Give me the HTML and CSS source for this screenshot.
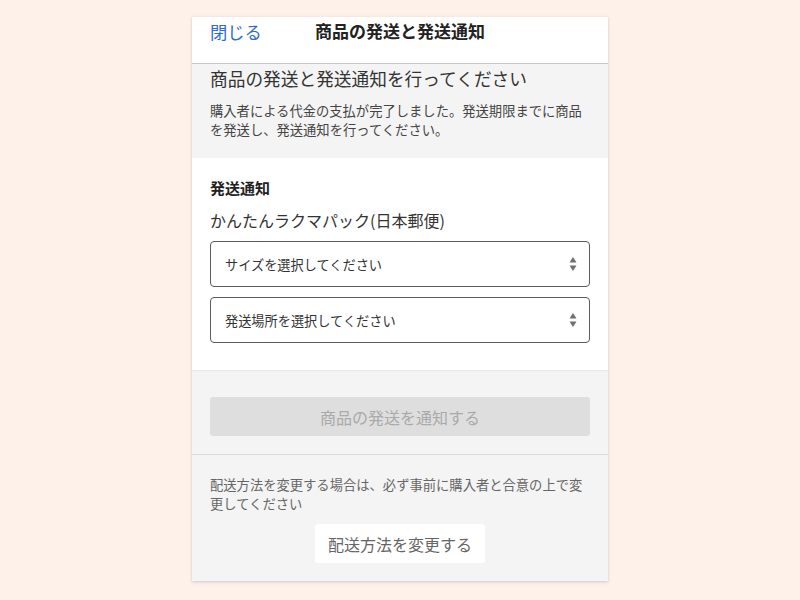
FILE: index.html
```html
<!DOCTYPE html>
<html lang="ja">
<head>
<meta charset="utf-8">
<link rel="stylesheet" href="styles.css">
</head>
<body>
<div class="card">
  <header class="topbar">
    <span class="close">閉じる</span>
    <span class="title">商品の発送と発送通知</span>
  </header>
  <section class="intro">
    <h1 class="intro-title">商品の発送と発送通知を行ってください</h1>
    <p class="intro-text">購入者による代金の支払が完了しました。発送期限までに商品を発送し、発送通知を行ってください。</p>
  </section>
  <section class="form">
    <h2 class="form-title">発送通知</h2>
    <div class="method">かんたんラクマパック(日本郵便)</div>
    <div class="select">
      <span>サイズを選択してください</span>
      <svg class="arrows" width="8" height="16" viewBox="0 0 8 16"><path d="M4 1 L7.5 6.5 L0.5 6.5 Z M0.5 9.5 L7.5 9.5 L4 15 Z" fill="#707070"/></svg>
    </div>
    <div class="select">
      <span>発送場所を選択してください</span>
      <svg class="arrows" width="8" height="16" viewBox="0 0 8 16"><path d="M4 1 L7.5 6.5 L0.5 6.5 Z M0.5 9.5 L7.5 9.5 L4 15 Z" fill="#707070"/></svg>
    </div>
  </section>
  <section class="submit">
    <div class="btn-disabled">商品の発送を通知する</div>
  </section>
  <section class="change">
    <p class="change-text">配送方法を変更する場合は、必ず事前に購入者と合意の上で変更してください</p>
    <div class="btn-change">配送方法を変更する</div>
  </section>
</div>
</body>
</html>
```
FILE: styles.css
```css
* { box-sizing: border-box; }
html, body { margin: 0; padding: 0; }
body {
  background: #fdf1ea;
  font-family: "Noto Sans CJK JP", "Noto Sans", sans-serif;
  color: #333;
  height: 600px;
  overflow: hidden;
}
.card {
  width: 416px;
  margin: 17px auto 0;
  background: #f4f4f4;
  box-shadow: 0 1px 3px rgba(0,0,0,0.18);
}
.topbar {
  height: 47px;
  background: #fff;
  border-bottom: 1px solid #c9c9c9;
  display: flex;
  align-items: flex-start;
  padding: 2px 18px 0;
  position: relative;
}
.close {
  color: #2f6bd6;
  font-size: 17.3px;
  line-height: 26px;
}
.title {
  position: absolute;
  left: 0; right: 0;
  top: 1px;
  text-align: center;
  font-weight: bold;
  font-size: 17px;
  line-height: 26px;
  color: #222;
  pointer-events: none;
}
.intro {
  padding: 2px 18px 0;
  height: 94px;
  background: #f4f4f4;
}
.intro-title {
  margin: 0;
  font-weight: normal;
  font-size: 17.7px;
  line-height: 24px;
  color: #333;
}
.intro-text {
  margin: 11px 0 0;
  font-size: 13.3px;
  line-height: 19px;
  color: #444;
}
.form {
  background: #fff;
  padding: 19px 18px 27px;
}
.form-title {
  margin: 0;
  font-size: 15px;
  font-weight: bold;
  line-height: 22px;
  color: #222;
}
.method {
  margin-top: 10px;
  font-size: 16px;
  line-height: 22px;
  color: #333;
}
.select {
  margin-top: 10px;
  height: 46px;
  border: 1px solid #5a5a5a;
  border-radius: 4px;
  display: flex;
  align-items: center;
  justify-content: space-between;
  padding: 0 12px 0 14px;
  font-size: 13.2px;
  color: #333;
}
.select + .select { margin-top: 10px; }
.arrows { display: block; }
.submit {
  background: #f4f4f4;
  padding: 27px 18px 18px;
  border-bottom: 1px solid #dcdcdc;
  box-shadow: inset 0 2px 2px -1px rgba(0,0,0,0.06);
}
.btn-disabled {
  height: 39px;
  background: #dedede;
  border-radius: 3px;
  display: flex;
  align-items: center;
  justify-content: center;
  font-size: 16px;
  color: #aaa;
}
.change {
  padding: 20px 18px 18px;
  display: flex;
  flex-direction: column;
  align-items: center;
}
.change-text {
  align-self: stretch;
  margin: 0;
  font-size: 13.3px;
  line-height: 19px;
  color: #666;
}
.btn-change {
  margin-top: 11px;
  width: 170px;
  height: 39px;
  background: #fff;
  border-radius: 3px;
  display: flex;
  align-items: center;
  justify-content: center;
  font-size: 16px;
  color: #666;
}
```
